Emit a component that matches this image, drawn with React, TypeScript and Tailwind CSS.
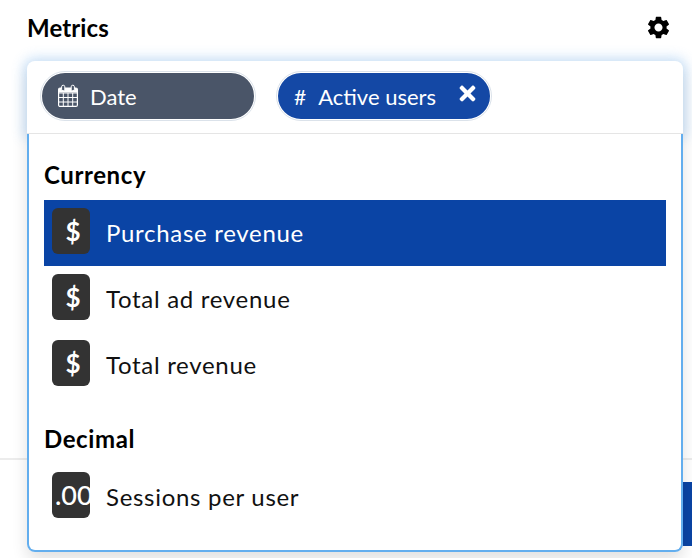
import { MdSettings } from 'react-icons/md';
import { FaTimes } from 'react-icons/fa';

const CalendarIcon = () => (
  <svg width="22" height="24" viewBox="0 0 22 24" fill="none" stroke="white" strokeWidth="1.2">
    <rect x="1.6" y="4" width="18.8" height="18.4" rx="1.5" />
    <path d="M1.6 9h18.8M1.6 13.5h18.8M1.6 18h18.8M6.3 9v13.4M11 9v13.4M15.7 9v13.4" strokeWidth="1" />
    <path d="M1.6 8.4V5.5a1.5 1.5 0 0 1 1.5-1.5h15.8a1.5 1.5 0 0 1 1.5 1.5v2.9z" fill="white" stroke="none" />
    <rect x="4.6" y="1.2" width="3.2" height="5.6" rx="1.6" fill="#4a5568" stroke="white" strokeWidth="1" />
    <rect x="14.2" y="1.2" width="3.2" height="5.6" rx="1.6" fill="#4a5568" stroke="white" strokeWidth="1" />
  </svg>
);

const MetricRow = ({ icon, label, selected }: { icon: string; label: string; selected?: boolean }) => (
  <div className={`flex items-center h-[66px] pl-2 ${selected ? 'bg-[#0a44a5] text-white' : 'text-[#111]'}`}>
    <div
      className={`w-[38px] h-[46px] mb-[4px] rounded-[6px] bg-[#333333] text-white flex items-center overflow-hidden shrink-0 ${
        icon === '$' ? 'justify-center pl-[4px] text-[26px] font-bold' : 'justify-start pl-[3px] text-[27px] font-medium'
      }`}
    >
      {icon}
    </div>
    <span className="ml-4 text-[24px] tracking-[0.7px]">{label}</span>
  </div>
);

export default function App() {
  return (
    <div className="relative h-[558px] w-[692px] overflow-hidden bg-white font-['Lato','Noto_Sans',sans-serif]">
      {/* Header */}
      <div className="flex items-center justify-between h-[56px] pl-[27px] pr-[20px]">
        <h2 className="text-[24px] font-bold text-black leading-none tracking-[0.1px]">Metrics</h2>
        <MdSettings className="w-[27px] h-[27px] mb-[1px] text-black" />
      </div>

      {/* Page behind the dropdown */}
      <div className="mt-[402px] border-t-2 border-[#ececec] h-[100px] flex justify-end pt-[22px]">
        <div className="w-[100px] h-[64px] bg-[#0a44a5]" />
      </div>

      {/* Dropdown */}
      <div className="absolute left-[27px] top-[61px] w-[656px] h-[491px] rounded-[8px] bg-white flex flex-col shadow-[0_8px_16px_rgba(0,0,0,0.12)]">
        <div className="h-[73px] shrink-0 flex items-center gap-5 px-[13px] pb-[3px] rounded-t-[8px] border-b border-[#e5e5e5] shadow-[0_0_12px_4px_rgba(99,170,238,0.3)] bg-white">
          <div className="h-[50px] w-[216px] rounded-[25px] border-2 border-white outline outline-1 outline-[#dbe2ea] -outline-offset-1 bg-[#4a5568] text-white flex items-center pl-[15px]">
            <CalendarIcon />
            <span className="ml-[11px] mt-[2px] text-[22px] leading-none">Date</span>
          </div>
          <div className="h-[50px] w-[216px] rounded-[25px] border-2 border-white outline outline-1 outline-[#dbe2ea] -outline-offset-1 bg-[#1448a5] text-white flex items-center pl-[16px]">
            <span className="mt-[2px] text-[21px] leading-none">#</span>
            <span className="ml-[12px] mt-[2px] text-[22px] leading-none">Active users</span>
            <FaTimes className="ml-[20px] mb-[4px] w-[23px] h-[23px]" />
          </div>
        </div>

        <div className="relative flex-1 bg-white border-x-2 border-b-2 border-[#63aeee] rounded-b-[8px] pl-[15px] pr-[15px] pt-[26px]">
          <h3 className="text-[24px] font-bold text-black leading-[30px] mb-[10px] tracking-[0.6px]">Currency</h3>
          <MetricRow icon="$" label="Purchase revenue" selected />
          <MetricRow icon="$" label="Total ad revenue" />
          <MetricRow icon="$" label="Total revenue" />
          <h3 className="mt-[26px] text-[24px] font-bold text-black leading-[30px] mb-[10px] tracking-[0.6px]">Decimal</h3>
          <MetricRow icon=".00" label="Sessions per user" />
        </div>
      </div>
    </div>
  );
}
